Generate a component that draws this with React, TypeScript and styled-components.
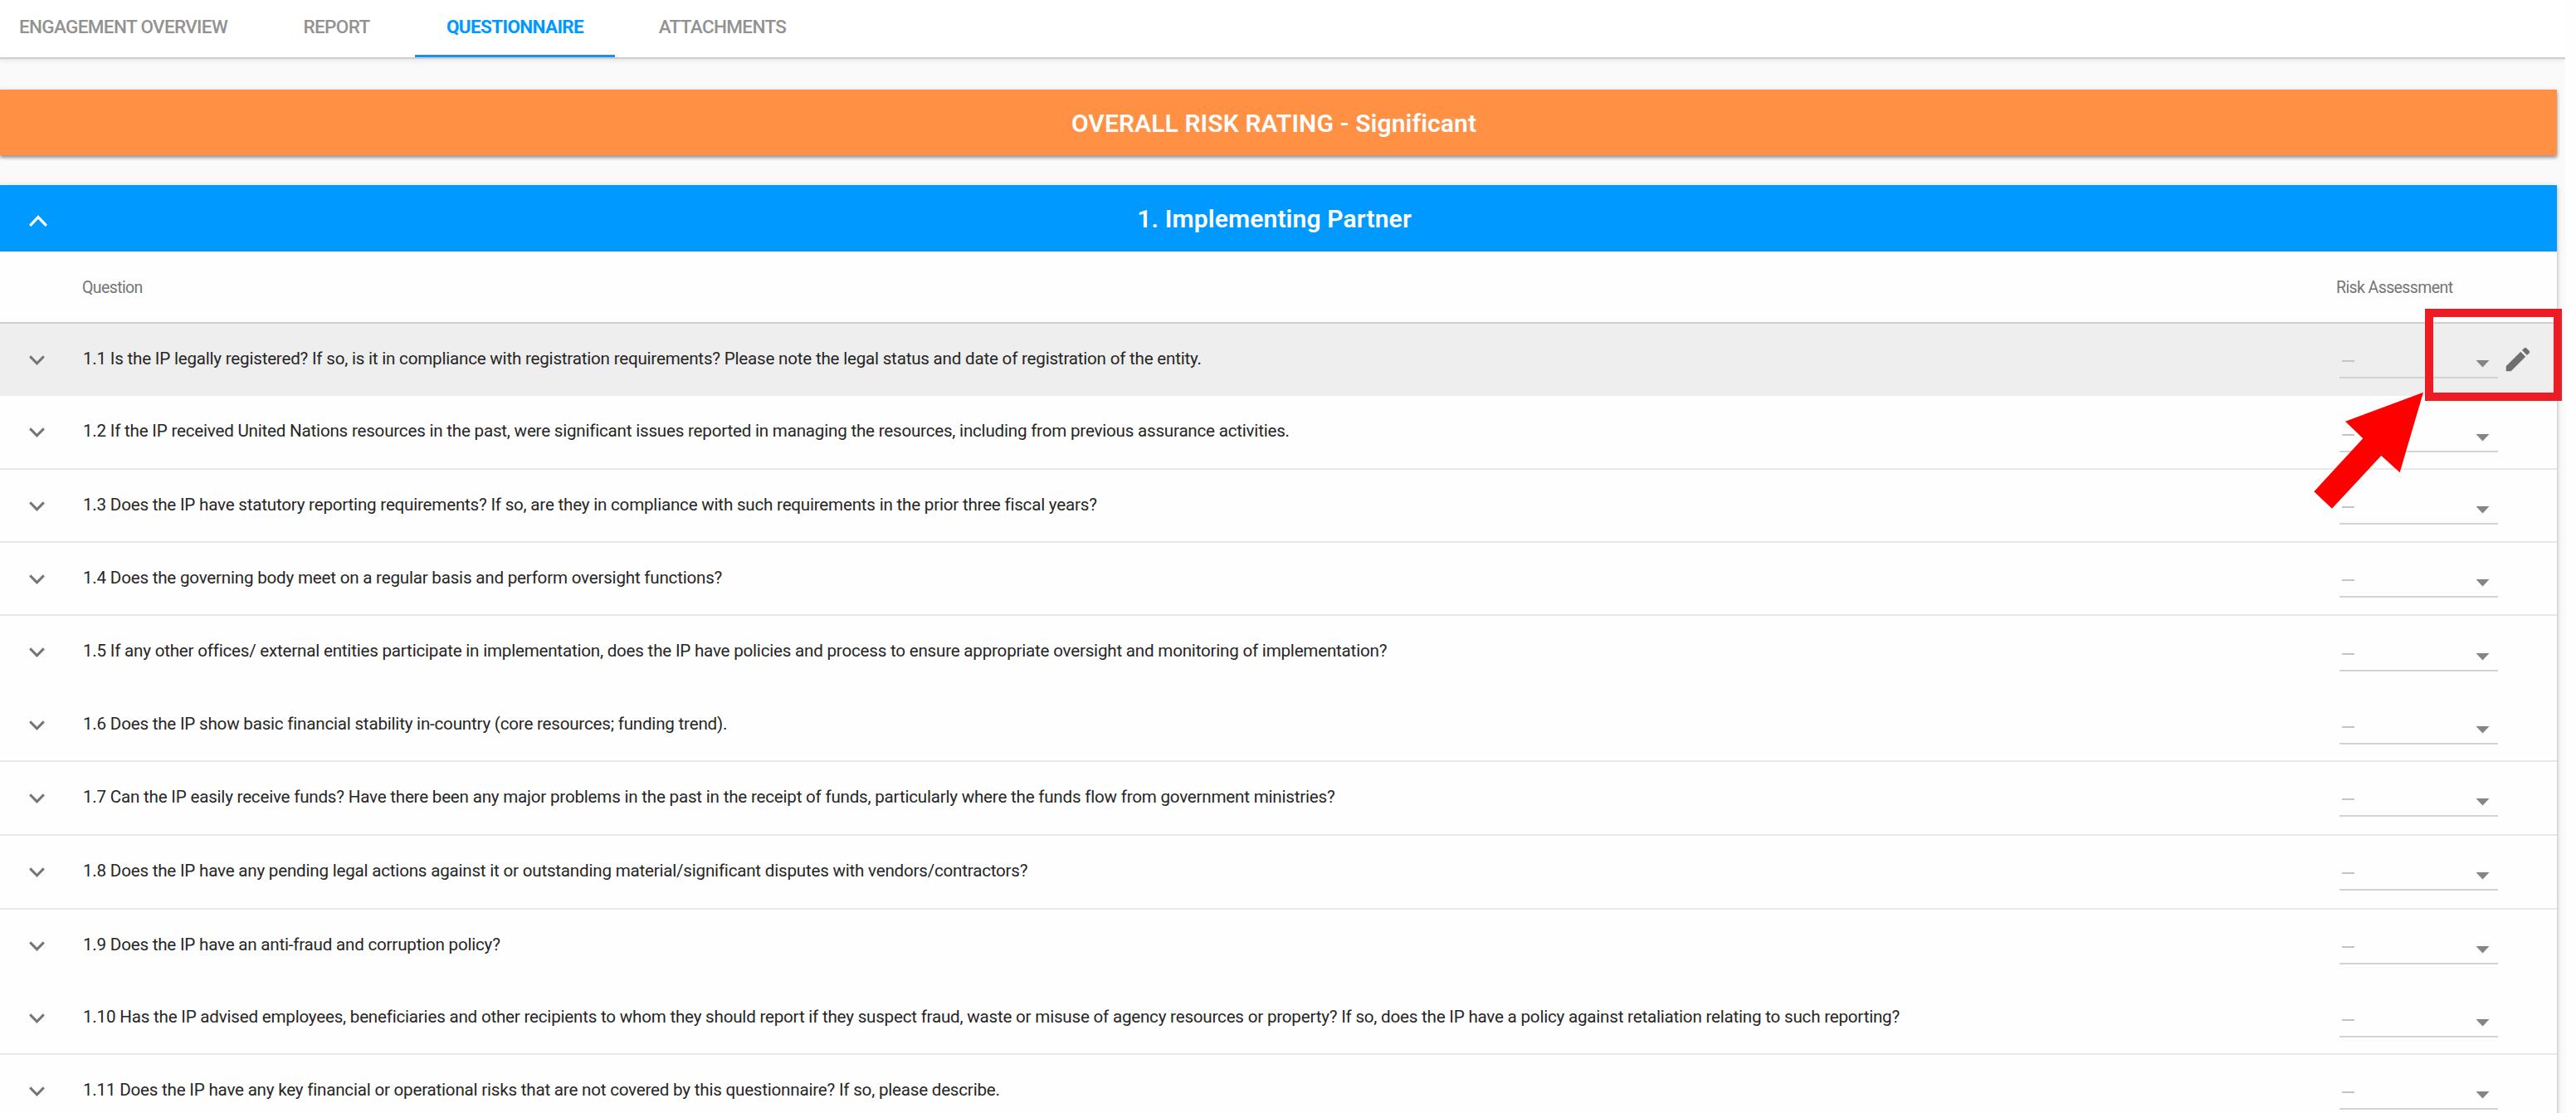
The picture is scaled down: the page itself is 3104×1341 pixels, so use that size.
import React, { useState } from 'react';
import styled, { createGlobalStyle } from 'styled-components';

const GlobalStyle = createGlobalStyle`
  * {
    box-sizing: border-box;
  }
  html, body {
    margin: 0;
    padding: 0;
    background-color: #fefefe;
    overflow: hidden;
  }
  body {
    font-family: Roboto, "Liberation Sans", sans-serif;
  }
`;

const Page = styled.div`
  position: relative;
  width: 3104px;
  height: 1341px;
  overflow: hidden;
`;

const Content = styled.main`
  width: 3091px;
  height: 1341px;
  background-color: #fafafa;
  display: flex;
  flex-direction: column;
  overflow: hidden;
`;

const TabBar = styled.nav`
  flex: none;
  height: 69px;
  display: flex;
  background-color: #fff;
  box-shadow: 0 2px 1px #cecece, 0 4px 6px rgba(0, 0, 0, 0.08);
`;

const Tab = styled.button<{ $active?: boolean; $width: number }>`
  flex: none;
  width: ${(p) => p.$width}px;
  height: 69px;
  padding: 0 0 3px;
  border: none;
  border-bottom: 3px solid ${(p) => (p.$active ? '#1493f0' : 'transparent')};
  background: none;
  font-family: inherit;
  font-size: 22.5px;
  font-weight: ${(p) => (p.$active ? 700 : 500)};
  letter-spacing: -0.65px;
  color: ${(p) => (p.$active ? '#0099ff' : '#929292')};
  white-space: nowrap;
  cursor: pointer;

  &:first-child {
    margin-left: -14px;
  }
`;

const RatingBanner = styled.div`
  flex: none;
  width: 3081px;
  height: 79px;
  margin-top: 39px;
  padding-right: 11px;
  padding-top: 1px;
  display: flex;
  align-items: center;
  justify-content: center;
  background-color: #ff9044;
  color: #fff;
  font-size: 30px;
  font-weight: 600;
  letter-spacing: 0.1px;
  box-shadow: 0 3px 4px rgba(0, 0, 0, 0.36), 0 1px 6px rgba(0, 0, 0, 0.14);
`;

const Panel = styled.section`
  flex: none;
  width: 3081px;
  margin-top: 36px;
  background-color: #fefefe;
  box-shadow: 0 3px 4px rgba(0, 0, 0, 0.25), 0 1px 8px rgba(0, 0, 0, 0.12);
`;

const PanelHeader = styled.header`
  height: 80px;
  display: flex;
  align-items: center;
  background-color: #0099ff;
  color: #fff;
  padding-left: 35px;

  svg {
    margin-top: 6px;
  }

  h2 {
    flex: 1;
    margin: 0;
    padding-right: 67px;
    text-align: center;
    font-size: 30px;
    font-weight: 600;
    letter-spacing: 0.15px;
  }
`;

const ColumnHeads = styled.div`
  height: 87px;
  display: flex;
  align-items: center;
  padding-top: 2px;
  padding-left: 99px;
  border-bottom: 2px solid #cfcfcf;
  font-size: 19.5px;
  letter-spacing: -0.6px;
  color: #757575;
`;

const QuestionHead = styled.span`
  width: 2716px;
`;

const Row = styled.div<{ $height: number; $hovered?: boolean; $line?: boolean }>`
  height: ${(p) => p.$height}px;
  display: flex;
  align-items: flex-start;
  background-color: ${(p) => (p.$hovered ? '#eeeeee' : '#fefefe')};
  border-bottom: ${(p) => (p.$line ? '2px solid #e9e9e9' : 'none')};
`;

const Toggle = styled.button`
  width: 100px;
  height: 88px;
  padding: 0 0 0 35px;
  border: none;
  background: none;
  display: flex;
  align-items: center;
  cursor: pointer;
`;

const QuestionText = styled.span`
  width: 2719px;
  padding-top: 29px;
  font-size: 20.6px;
  line-height: 26px;
  letter-spacing: -0.21px;
  color: #262626;
  white-space: nowrap;
`;

const Select = styled.div<{ $drop: number }>`
  width: 191px;
  height: 66px;
  margin-top: ${(p) => p.$drop}px;
  padding: 44px 10px 0 3px;
  display: flex;
  justify-content: space-between;
  align-items: flex-start;
  border-bottom: 2px solid #d3d3d3;
`;

const Dash = styled.span`
  width: 15px;
  height: 2px;
  background-color: #c4c4c4;
`;

const EditButton = styled.button`
  width: 42px;
  height: 85px;
  margin-left: 3px;
  padding: 0;
  border: none;
  background: none;
  display: flex;
  align-items: center;
  justify-content: center;
  cursor: pointer;
`;

const Highlight = styled.div`
  position: absolute;
  left: 2922px;
  top: 372px;
  width: 165px;
  height: 111px;
  border: 10px solid #ed1c24;
`;

const PointerArrow = styled.svg`
  position: absolute;
  left: 2788px;
  top: 472px;
`;

const TABS = [
  { label: 'ENGAGEMENT OVERVIEW', width: 325 },
  { label: 'REPORT', width: 189 },
  { label: 'QUESTIONNAIRE', width: 241 },
  { label: 'ATTACHMENTS', width: 259 },
];

const QUESTIONS = [
  { text: '1.1 Is the IP legally registered? If so, is it in compliance with registration requirements? Please note the legal status and date of registration of the entity.', height: 87, line: false, drop: 0 },
  { text: '1.2 If the IP received United Nations resources in the past, were significant issues reported in managing the resources, including from previous assurance activities.', height: 89, line: true, drop: 2 },
  { text: '1.3 Does the IP have statutory reporting requirements? If so, are they in compliance with such requirements in the prior three fiscal years?', height: 88, line: true, drop: 0 },
  { text: '1.4 Does the governing body meet on a regular basis and perform oversight functions?', height: 88, line: true, drop: 0 },
  { text: '1.5 If any other offices/ external entities participate in implementation, does the IP have policies and process to ensure appropriate oversight and monitoring of implementation?', height: 88, line: false, drop: 1 },
  { text: '1.6 Does the IP show basic financial stability in-country (core resources; funding trend).', height: 88, line: true, drop: 1 },
  { text: '1.7 Can the IP easily receive funds? Have there been any major problems in the past in the receipt of funds, particularly where the funds flow from government ministries?', height: 89, line: true, drop: 0 },
  { text: '1.8 Does the IP have any pending legal actions against it or outstanding material/significant disputes with vendors/contractors?', height: 89, line: true, drop: 0 },
  { text: '1.9 Does the IP have an anti-fraud and corruption policy?', height: 87, line: false, drop: 0 },
  { text: '1.10 Has the IP advised employees, beneficiaries and other recipients to whom they should report if they suspect fraud, waste or misuse of agency resources or property? If so, does the IP have a policy against retaliation relating to such reporting?', height: 88, line: true, drop: 1 },
  { text: '1.11 Does the IP have any key financial or operational risks that are not covered by this questionnaire? If so, please describe.', height: 88, line: true, drop: 0 },
];

const App = () => {
  const [tab, setTab] = useState<string>('QUESTIONNAIRE');
  const [open, setOpen] = useState<boolean>(true);

  return (
    <Page>
      <GlobalStyle />
      <Content>
        <TabBar>
          {TABS.map((t) => (
            <Tab
              key={t.label}
              $active={t.label === tab}
              $width={t.width}
              onClick={() => setTab(t.label)}
            >
              {t.label}
            </Tab>
          ))}
        </TabBar>
        <RatingBanner>OVERALL RISK RATING - Significant</RatingBanner>
        <Panel>
          <PanelHeader onClick={() => setOpen(!open)}>
            <svg width="22" height="14" viewBox="0 0 22 14">
              <path d={open ? 'M1.2 12.8 L11 2.6 L20.8 12.8' : 'M1.2 1.2 L11 11.4 L20.8 1.2'} fill="none" stroke="#fff" strokeWidth="3.2" />
            </svg>
            <h2>1. Implementing Partner</h2>
          </PanelHeader>
          {open && (
            <>
              <ColumnHeads>
                <QuestionHead>Question</QuestionHead>
                <span>Risk Assessment</span>
              </ColumnHeads>
              {QUESTIONS.map((q, i) => (
                <Row key={q.text} $height={q.height} $hovered={i === 0} $line={q.line}>
                  <Toggle>
                    <svg width="19" height="12" viewBox="0 0 19 12">
                      <path d="M1.2 1.4 L9.5 9.8 L17.8 1.4" fill="none" stroke="#757575" strokeWidth="3" />
                    </svg>
                  </Toggle>
                  <QuestionText>{q.text}</QuestionText>
                  <Select $drop={q.drop}>
                    <Dash />
                    <svg width="17" height="9" viewBox="0 0 17 9">
                      <path d="M0.5 0 H16.5 L8.5 8.5 Z" fill="#858585" />
                    </svg>
                  </Select>
                  {i === 0 && (
                    <EditButton>
                      <svg width="38" height="38" viewBox="0 0 24 24">
                        <path
                          fill="#6f6f6f"
                          d="M3 17.25V21h3.75L17.81 9.94l-3.75-3.75L3 17.25zM20.71 7.04a1 1 0 0 0 0-1.41l-2.34-2.34a1 1 0 0 0-1.41 0l-1.83 1.83 3.75 3.75 1.83-1.83z"
                        />
                      </svg>
                    </EditButton>
                  )}
                </Row>
              ))}
            </>
          )}
        </Panel>
      </Content>
      <Highlight />
      <PointerArrow width="133" height="142" viewBox="0 0 133 142">
        <path d="M132 0.7 L103.7 97.3 L81.3 77 L22 140.7 L0.3 120.3 L59.3 56.3 L38 35.7 Z" fill="#ff0000" />
      </PointerArrow>
    </Page>
  );
};

export default App;
